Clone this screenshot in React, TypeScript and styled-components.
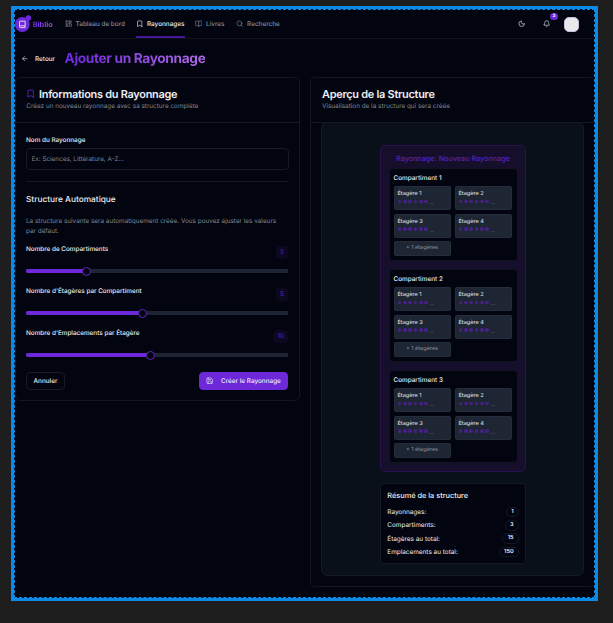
import React from "react";
import styled, { createGlobalStyle } from "styled-components";
import { ArrowLeft, Bell, Bookmark, BookOpen, LayoutDashboard, Moon, Save, Search } from "lucide-react";

const Global = createGlobalStyle`
  * { box-sizing: border-box; }
  body { margin: 0; background: #1e1e1e; overflow: hidden; font-family: Inter, "Liberation Sans", sans-serif; text-rendering: geometricPrecision; }
  h1, h2, h3, h4, p { margin: 0; }
  button, input { font-family: inherit; text-rendering: inherit; }
  svg { display: block; flex: none; }
`;

const line = "#121722";

const Stage = styled.div`
  width: 613px;
  height: 623px;
  padding: 6px 15px 22px 11px;
  background: #1e1e1e;
`;
const Selection = styled.div`
  width: 587px;
  height: 595px;
  border: 3px solid #0d8ae6;
`;
const Screen = styled.div`
  height: 100%;
  border: 1px dashed #0d8ae6;
  background: #020510;
  color: #eceef2;
  overflow: hidden;
`;
const Header = styled.header`
  display: flex;
  align-items: center;
  height: 29px;
  border-bottom: 1px solid #0d121c;
`;
const Brand = styled.div`
  display: flex;
  align-items: center;
  width: 49.5px;
  font-size: 7.4px;
  font-weight: 700;
`;
const BrandName = styled.span`
  margin-left: -0.3px;
  color: transparent;
  background: linear-gradient(90deg, #6d28d9, #9b5de5);
  background-clip: text;
`;
const NavItem = styled.a<{ $w: number; $active?: boolean }>`
  display: flex;
  align-items: center;
  gap: 3.7px;
  width: ${(p) => p.$w}px;
  height: 28px;
  font-size: 6.4px;
  font-weight: 500;
  white-space: nowrap;
  color: ${(p) => (p.$active ? "#eceef2" : "#858b98")};
`;
const Underlined = styled.span`
  display: flex;
  align-items: center;
  gap: 3.4px;
  width: 48.5px;
  height: 28px;
  padding: 2px 0 0 0.2px;
  border-bottom: 2px solid #43199a;
`;
const Tools = styled.div`
  display: flex;
  align-items: center;
  margin-left: auto;
  padding-right: 15px;
`;
const BellBox = styled.div`
  position: relative;
  margin: 0 13.3px 0 18.3px;
`;
const Count = styled.span`
  position: absolute;
  left: 7px;
  top: -7.5px;
  width: 7.5px;
  height: 7.5px;
  border-radius: 50%;
  background: #6d28d9;
  color: #fff;
  font-size: 4.5px;
  font-weight: 700;
  line-height: 7.5px;
  text-align: center;
`;
const Avatar = styled.div`
  width: 15px;
  height: 15px;
  border: 0.5px solid #cabfe0;
  border-radius: 5px;
  background: #e9e9eb;
`;
const TitleRow = styled.div`
  display: flex;
  align-items: center;
  height: 39px;
  margin-bottom: -1px;
  padding-left: 5.5px;
`;
const Back = styled.a`
  display: flex;
  align-items: center;
  gap: 7.1px;
  width: 44px;
  font-size: 6.4px;
  font-weight: 500;
`;
const PageTitle = styled.h1`
  font-size: 13.7px;
  line-height: 18px;
  font-weight: 700;
  letter-spacing: -0.025em;
  color: transparent;
  background: linear-gradient(90deg, #6d28d9, #b26ae8);
  background-clip: text;
`;
const Columns = styled.main`
  display: grid;
  grid-template-columns: 285px 285px;
  gap: 10px;
  align-items: start;
`;
const Card = styled.section<{ $h: number }>`
  height: ${(p) => p.$h}px;
  border: 1px solid ${line};
  border-radius: 5px;
`;
const CardHeader = styled.div<{ $inset?: number }>`
  height: 45px;
  padding: 8.5px 0 0 ${(p) => p.$inset ?? 10.3}px;
  border-bottom: 1px solid #141925;
`;
const CardTitle = styled.h2`
  display: flex;
  align-items: center;
  gap: 3.4px;
  height: 15px;
  font-size: 10.95px;
  font-weight: 600;
  letter-spacing: -0.025em;
  white-space: nowrap;
`;
const Muted = styled.p`
  font-size: 6.39px;
  line-height: 9.3px;
  color: #7e8592;
`;
const Form = styled.div`
  padding: 12.6px 11px 0 10px;
`;
const Label = styled.label`
  display: block;
  font-size: 6.36px;
  line-height: 9px;
  font-weight: 500;
`;
const Input = styled.input`
  display: block;
  width: 263px;
  height: 22px;
  margin: 3.4px 0 11px;
  padding: 0 4.5px;
  border: 1px solid #151a26;
  border-radius: 4px;
  background: transparent;
  font-size: 6.35px;
  &::placeholder { color: #7e8592; }
`;
const SubTitle = styled.h3`
  padding-top: 11.6px;
  margin-bottom: 10.9px;
  border-top: 1px solid #141925;
  font-size: 8.3px;
  line-height: 13px;
  font-weight: 500;
`;
const FieldStack = styled.div`
  padding-top: 8.9px;
`;
const Field = styled.div`
  height: 42px;
`;
const FieldHead = styled.div`
  display: flex;
  justify-content: space-between;
  height: 22.5px;
`;
const Value = styled.span`
  height: 13px;
  margin-top: 0.7px;
  padding: 0 4.2px;
  border-radius: 4px;
  background: #0c0820;
  color: #5a21b6;
  font-size: 6.4px;
  line-height: 13px;
`;
const Track = styled.div`
  display: flex;
  align-items: center;
  height: 8px;
  border-radius: 2px;
  background: linear-gradient(#1d2432, #1d2432) center / 100% 4px no-repeat;
`;
const Fill = styled.div<{ $w: number }>`
  width: ${(p) => p.$w}px;
  height: 4px;
  border-radius: 2px 0 0 2px;
  background: #6d28d9;
`;
const Thumb = styled.div`
  flex: none;
  width: 9.4px;
  height: 9.4px;
  margin-left: -1px;
  border: 1px solid #6325c6;
  border-radius: 50%;
  background: #020510;
`;
const Actions = styled.div`
  display: flex;
  justify-content: space-between;
  padding-top: 0.7px;
`;
const Button = styled.button<{ $primary?: boolean }>`
  display: flex;
  align-items: center;
  justify-content: center;
  gap: 7.5px;
  width: ${(p) => (p.$primary ? 89 : 39)}px;
  height: 18.5px;
  padding: 0;
  border: 1px solid ${(p) => (p.$primary ? "#6d28d9" : "#151a26")};
  border-radius: 4px;
  background: ${(p) => (p.$primary ? "#6d28d9" : "transparent")};
  color: #eceef2;
  font-size: 6.4px;
  font-weight: 500;
  white-space: nowrap;
`;
const Preview = styled.div`
  display: flex;
  flex-direction: column;
  align-items: center;
  gap: 11px;
  width: 263px;
  height: 454px;
  margin: -1px 0 0 10px;
  padding: 22px 0 0 1px;
  border: 1px solid #151b26;
  border-radius: 6px;
  background: #0a101a;
`;
const Rack = styled.div`
  display: flex;
  flex-direction: column;
  gap: 8px;
  width: 146px;
  height: 327px;
  padding: 7px 7.5px 0;
  border: 1px solid #27124f;
  border-radius: 5px;
  background: #150f2b;
`;
const RackTitle = styled.h3`
  height: 15px;
  margin-bottom: -8px;
  font-size: 7.22px;
  line-height: 12px;
  font-weight: 500;
  color: #5b21b6;
  text-align: center;
  white-space: nowrap;
`;
const Compartment = styled.div`
  height: 93px;
  padding: 5px 4px 0;
  border: 1px solid #11141f;
  border-radius: 4px;
  background: #020510;
`;
const CompartmentTitle = styled.h4`
  height: 12.3px;
  font-size: 6.4px;
  line-height: 9.8px;
  font-weight: 500;
`;
const Shelves = styled.div`
  display: grid;
  grid-template-columns: 57px 57px;
  grid-template-rows: 24px 24px 14.5px;
  gap: 3.5px 4px;
`;
const Shelf = styled.div`
  padding: 2.8px 3px 0;
  border: 0.5px solid #252d3b;
  border-radius: 1.5px;
  background: #1e2633;
  font-size: 5.57px;
  line-height: 8px;
  color: #e3e6eb;
`;
const Slots = styled.div`
  display: flex;
  align-items: center;
  gap: 1.7px;
  height: 7px;
  font-size: 5px;
  color: #858b98;
`;
const Slot = styled.i`
  width: 3.7px;
  height: 3.7px;
  border-radius: 50%;
  background: #462087;
`;
const Dots = styled.span`
  padding-top: 4px;
  line-height: 7px;
`;
const More = styled.div`
  border: 0.5px solid #252d3b;
  border-radius: 1.5px;
  background: #1e2633;
  color: #8b92a0;
  font-size: 5.57px;
  line-height: 13px;
  text-align: center;
`;
const Summary = styled.div`
  width: 146px;
  height: 81px;
  padding: 6.3px 6px 0 6.3px;
  border: 1px solid #151a25;
  border-radius: 4px;
  background: #020510;
`;
const SummaryTitle = styled.h3`
  height: 15px;
  font-size: 7.35px;
  line-height: 12px;
  font-weight: 500;
`;
const SummaryRow = styled.div`
  display: flex;
  align-items: center;
  justify-content: space-between;
  height: 13.35px;
  font-size: 6.42px;
`;
const Pill = styled.span`
  height: 10.5px;
  padding: 0 4.4px;
  border: 1px solid #141925;
  border-radius: 6px;
  font-size: 5.57px;
  line-height: 8.5px;
  font-weight: 600;
`;

const Logo = () => (
  <svg width="18" height="20" viewBox="0 0 18 20">
    <circle cx="7.3" cy="10.5" r="7.4" fill="#6d28d9" />
    <circle cx="13.4" cy="4" r="2.8" fill="#6d28d9" />
    <path d="M4.5 12.2V8Q4.5 7.2 5.3 7.2H10.1V13.6H5.4a.9.9 0 0 1 0-1.8h4.7" fill="none" stroke="#eee6fb" strokeWidth=".9" />
  </svg>
);

const fields = [
  { label: "Nombre de Compartiments", value: 3, fill: 57 },
  { label: "Nombre d'Étagères par Compartiment", value: 5, fill: 113 },
  { label: "Nombre d'Emplacements par Étagère", value: 10, fill: 120.5 },
];
const totals: [string, number][] = [
  ["Rayonnages:", 1],
  ["Compartiments:", 3],
  ["Étagères au total:", 15],
  ["Emplacements au total:", 150],
];

export default function App() {
  return (
    <Stage>
      <Global />
      <Selection>
        <Screen>
          <Header>
            <Brand><Logo /><BrandName>Biblio</BrandName></Brand>
            <NavItem $w={71.5}><LayoutDashboard size={7.4} />Tableau de bord</NavItem>
            <NavItem $w={59} $active><Underlined><Bookmark size={7.4} />Rayonnages</Underlined></NavItem>
            <NavItem $w={41}><BookOpen size={7.4} />Livres</NavItem>
            <NavItem $w={50}><Search size={7.4} />Recherche</NavItem>
            <Tools>
              <Moon size={7.4} />
              <BellBox><Bell size={7.4} /><Count>3</Count></BellBox>
              <Avatar />
            </Tools>
          </Header>
          <TitleRow>
            <Back><ArrowLeft size={7.4} />Retour</Back>
            <PageTitle>Ajouter un Rayonnage</PageTitle>
          </TitleRow>
          <Columns>
            <Card $h={324}>
              <CardHeader>
                <CardTitle><Bookmark size={9.3} color="#6d28d9" />Informations du Rayonnage</CardTitle>
                <Muted>Créez un nouveau rayonnage avec sa structure complète</Muted>
              </CardHeader>
              <Form>
                <Label>Nom du Rayonnage</Label>
                <Input placeholder="Ex: Sciences, Littérature, A-Z..." />
                <SubTitle>Structure Automatique</SubTitle>
                <Muted>La structure suivante sera automatiquement créée. Vous pouvez ajuster les valeurs<br />par défaut.</Muted>
                <FieldStack>
                  {fields.map((f) => (
                    <Field key={f.label}>
                      <FieldHead><Label>{f.label}</Label><Value>{f.value}</Value></FieldHead>
                      <Track><Fill $w={f.fill} /><Thumb /></Track>
                    </Field>
                  ))}
                </FieldStack>
                <Actions>
                  <Button>Annuler</Button>
                  <Button $primary><Save size={7.4} />Créer le Rayonnage</Button>
                </Actions>
              </Form>
            </Card>
            <Card $h={510}>
              <CardHeader $inset={11}>
                <CardTitle>Aperçu de la Structure</CardTitle>
                <Muted>Visualisation de la structure qui sera créée</Muted>
              </CardHeader>
              <Preview>
                <Rack>
                  <RackTitle>Rayonnage: Nouveau Rayonnage</RackTitle>
                  {[1, 2, 3].map((c) => (
                    <Compartment key={c}>
                      <CompartmentTitle>Compartiment {c}</CompartmentTitle>
                      <Shelves>
                        {[1, 2, 3, 4].map((s) => (
                          <Shelf key={s}>
                            Étagère {s}
                            <Slots>
                              {[0, 1, 2, 3, 4, 5].map((i) => <Slot key={i} />)}
                              <Dots>...</Dots>
                            </Slots>
                          </Shelf>
                        ))}
                        <More>+ 1 étagères</More>
                      </Shelves>
                    </Compartment>
                  ))}
                </Rack>
                <Summary>
                  <SummaryTitle>Résumé de la structure</SummaryTitle>
                  {totals.map(([name, n]) => (
                    <SummaryRow key={name}>{name}<Pill>{n}</Pill></SummaryRow>
                  ))}
                </Summary>
              </Preview>
            </Card>
          </Columns>
        </Screen>
      </Selection>
    </Stage>
  );
}
